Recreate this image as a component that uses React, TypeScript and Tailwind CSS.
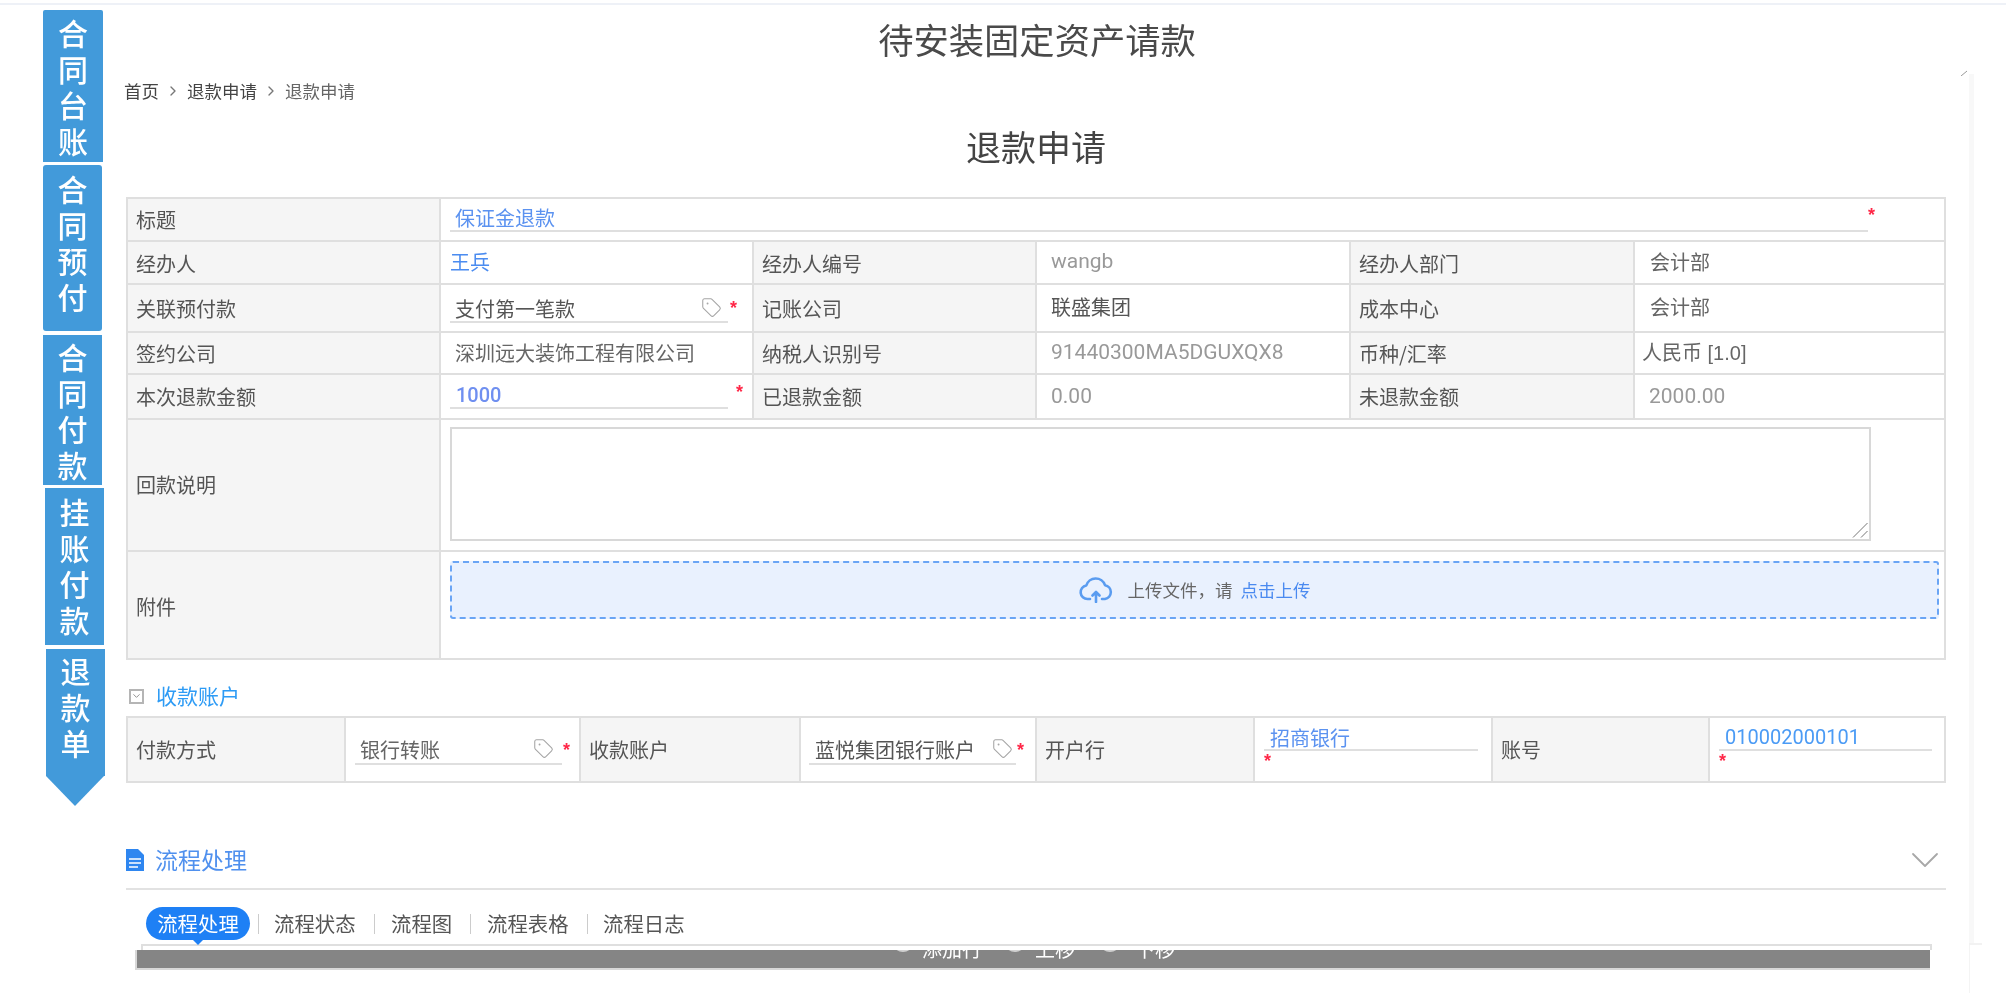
import React from "react";
import { ChevronDown, ChevronRight, Tag } from "lucide-react";

const FONT = "[font-family:'Noto_Sans_CJK_SC','Liberation_Sans',sans-serif]";
const NUM = "[font-family:Roboto,'Noto_Sans_CJK_SC',sans-serif]";

function SideBlock({ text, className }: { text: string; className: string }) {
  return (
    <div className={`flex flex-col items-center justify-center bg-[#429ada] text-[30px] font-medium leading-[36px] text-white ${className}`}>
      {text.split("").map((c, i) => (
        <span key={i}>{c}</span>
      ))}
    </div>
  );
}

const Star = ({ className = "" }: { className?: string }) => (
  <span className={`h-[12px] overflow-visible text-[18px] font-bold leading-[18px] text-[#ff2848] [font-family:'Liberation_Sans',sans-serif] ${className}`}>*</span>
);

const Label = ({ children, className = "" }: { children: React.ReactNode; className?: string }) => (
  <div className={`flex items-center border-r-2 border-[#dfdfdf] bg-[#f5f5f5] pl-[8px] text-[#555] ${className}`}>{children}</div>
);

const Val = ({ children, className = "" }: { children?: React.ReactNode; className?: string }) => (
  <div className={`flex border-r-2 border-[#dfdfdf] last:border-r-0 ${className}`}>{children}</div>
);

const TagIcon = () => <Tag size={21} strokeWidth={1.2} className="mb-[3px] shrink-0 text-[#a5a5a5]" />;

function Row({ children, className }: { children: React.ReactNode; className: string }) {
  return (
    <div className={`grid grid-cols-[313px_313px_283px_314px_284px_1fr] border-b-2 border-[#dfdfdf] ${className}`}>{children}</div>
  );
}

export default function App() {
  return (
    <div className={`relative h-[996px] w-[2006px] overflow-hidden bg-white blur-[0.4px] ${FONT}`}>
      <div className="h-[3px]" />
      <div className="h-[2px] bg-[#eef1f7]" />
      <div className="flex">
        {/* step ribbon */}
        <div className="ml-[43px] mt-[5px] flex w-[62px] shrink-0 flex-col">
          <SideBlock text="合同台账" className="h-[152px] w-[60px] rounded-t-[2px]" />
          <SideBlock text="合同预付" className="mt-[3px] h-[166px] w-[59px] rounded-[3px] pb-[12px]" />
          <SideBlock text="合同付款" className="mt-[4px] h-[150px] w-[59px]" />
          <SideBlock text="挂账付款" className="ml-[2px] mt-[3px] h-[157px] w-[59px] pb-[4px]" />
          <div className="ml-[3px] mt-[4px] w-[59px]">
            <SideBlock text="退款单" className="h-[127px] w-[59px] pb-[14px]" />
            <div className="h-0 w-0 border-x-[29.5px] border-t-[30px] border-x-transparent border-t-[#429ada]" />
          </div>
        </div>

        {/* main */}
        <div className="ml-[21px] flex w-[1820px] shrink-0 flex-col">
          <div className="mt-[9px] h-[50px] pl-[2px] text-center text-[35.3px] leading-[50px] text-[#4a4a4a]">待安装固定资产请款</div>
          <div className="-ml-[2px] mt-[15px] flex h-[24px] items-center gap-[6px] text-[17.5px] text-[#444]">
            <span>首页</span>
            <ChevronRight size={16} strokeWidth={2} className="text-[#777]" />
            <span>退款申请</span>
            <ChevronRight size={16} strokeWidth={2} className="text-[#777]" />
            <span className="text-[#666]">退款申请</span>
          </div>
          <div className="mt-[18px] h-[50px] text-center text-[35px] leading-[50px] text-[#444]">退款申请</div>

          <div className="mt-[26px] w-[1820px] border-2 border-[#dfdfdf] text-[20px]">
            <div className="grid h-[43px] grid-cols-[313px_1fr] border-b-2 border-[#dfdfdf]">
              <Label>标题</Label>
              <div className="flex pl-[9px]">
                <div className="mt-[3px] h-[30px] w-[1418px] border-b-2 border-[#dfdfdf] pl-[5px] text-[20px] leading-[31px] text-[#5b92f0]">保证金退款</div>
                <Star className="ml-[0px] mt-[7px]" />
              </div>
            </div>
            <Row className="h-[43px]">
              <Label className="pt-[2px]">经办人</Label>
              <Val className="items-center pb-[2px] pl-[9px] text-[#4b8cf0]">王兵</Val>
              <Label className="pt-[2px]">经办人编号</Label>
              <Val className={`items-center pb-[2px] pl-[14px] text-[21px] text-[#999] ${NUM}`}>wangb</Val>
              <Label className="pt-[2px]">经办人部门</Label>
              <Val className="items-center pb-[2px] pl-[15px] text-[#666]">会计部</Val>
            </Row>
            <Row className="h-[48px]">
              <Label className="pt-[2px]">关联预付款</Label>
              <Val className="items-center pl-[9px]">
                <div className="flex h-[30px] w-[278px] items-center justify-between border-b-2 border-[#dfdfdf] pl-[5px] pr-[6px] pt-[3px] text-[#555]">
                  支付第一笔款
                  <TagIcon />
                </div>
                <Star className="ml-[2px] mb-[6px]" />
              </Val>
              <Label className="pt-[2px]">记账公司</Label>
              <Val className="items-center pb-[2px] pl-[14px] text-[#555]">联盛集团</Val>
              <Label className="pt-[2px]">成本中心</Label>
              <Val className="items-center pb-[2px] pl-[15px] text-[#666]">会计部</Val>
            </Row>
            <Row className="h-[42px]">
              <Label className="pt-[2px]">签约公司</Label>
              <Val className="items-center pl-[14px] text-[#666]">深圳远大装饰工程有限公司</Val>
              <Label className="pt-[2px]">纳税人识别号</Label>
              <Val className={`items-center pl-[14px] text-[21px] text-[#999] ${NUM}`}>91440300MA5DGUXQX8</Val>
              <Label className="pt-[2px]">币种/汇率</Label>
              <Val className="items-center pl-[7px] text-[20px] text-[#666] [font-family:'Liberation_Sans','Noto_Sans_CJK_SC',sans-serif]">人民币 [1.0]</Val>
            </Row>
            <Row className="h-[45px]">
              <Label>本次退款金额</Label>
              <Val className="items-start pl-[9px] pt-[4px]">
                <div className={`flex h-[30px] w-[278px] items-center border-b-2 border-[#dfdfdf] pl-[6px] pt-[3px] text-[20px] font-medium text-[#6f8ff0] ${NUM}`}>1000</div>
                <Star className="ml-[8px] mt-[4px]" />
              </Val>
              <Label>已退款金额</Label>
              <Val className={`items-center pl-[14px] text-[21px] text-[#999] ${NUM}`}>0.00</Val>
              <Label>未退款金额</Label>
              <Val className={`items-center pl-[14px] text-[21px] text-[#999] ${NUM}`}>2000.00</Val>
            </Row>
            <div className="grid h-[132px] grid-cols-[313px_1fr] border-b-2 border-[#dfdfdf]">
              <Label>回款说明</Label>
              <div className="pl-[9px] pt-[7px]">
                <div className="relative h-[114px] w-[1421px]">
                  <textarea readOnly className="block h-[114px] w-[1421px] resize-none border-2 border-[#d8d8d8] bg-white outline-none" />
                  <svg width="16" height="16" viewBox="0 0 16 16" className="absolute bottom-[3px] right-[3px]" stroke="#777" strokeWidth="1" fill="none">
                    <path d="M1 15.5L15.5 1M9 15.5L15.5 9" />
                  </svg>
                </div>
              </div>
            </div>
            <div className="grid h-[106px] grid-cols-[313px_1fr]">
              <Label className="pt-[4px]">附件</Label>
              <div className="pl-[9px] pr-[5px] pt-[9px]">
                <div className="flex h-[58px] items-center justify-center rounded-[3px] border-2 border-dashed border-[#6aa5f5] bg-[#e9f1fe] text-[17.5px]">
                  <svg width="34" height="26" viewBox="0 0 34 26" fill="none" stroke="#5a9cf0" strokeWidth="2.6" strokeLinecap="round" strokeLinejoin="round" className="mr-[15px]">
                    <path d="M11 22H8.5a6.8 6.8 0 0 1-1.2-13.5A9.8 9.8 0 0 1 26 8.2 7 7 0 0 1 26 22h-3" />
                    <path d="M17 25V15M13.5 18.5l3.5-3.5 3.5 3.5" />
                  </svg>
                  <span className="text-[#666]">上传文件，请</span>
                  <span className="ml-[8px] text-[#4a8af0]">点击上传</span>
                </div>
              </div>
            </div>
          </div>

          <div className="ml-[3px] mt-[23px] flex h-[26px] items-center gap-[12px] text-[21px] text-[#2d9bf5]">
            <span className="flex h-[15px] w-[15px] items-center justify-center border-2 border-[#b5b5b5]">
              <ChevronDown size={12} strokeWidth={2} className="text-[#888]" />
            </span>
            收款账户
          </div>

          <div className="mt-[7px] grid h-[67px] w-[1820px] grid-cols-[218px_235px_220px_236px_218px_238px_217px_1fr] border-2 border-[#dfdfdf] text-[20px]">
            <Label>付款方式</Label>
            <Val className="items-center pl-[9px]">
              <div className="flex h-[30px] w-[207px] items-center justify-between border-b-2 border-[#dfdfdf] pl-[5px] pr-[8px] pt-[3px] text-[#666]">
                银行转账
                <TagIcon />
              </div>
              <Star className="ml-[1px] mb-[6px]" />
            </Val>
            <Label>收款账户</Label>
            <Val className="items-center pl-[8px]">
              <div className="flex h-[30px] w-[207px] items-center justify-between border-b-2 border-[#dfdfdf] pl-[6px] pr-[3px] pt-[3px] text-[#555]">
                <span className="whitespace-nowrap text-[20px]">蓝悦集团银行账户</span>
                <TagIcon />
              </div>
              <Star className="ml-[1px] mb-[6px]" />
            </Val>
            <Label>开户行</Label>
            <Val className="flex-col items-start pl-[9px] pt-[9px]">
              <div className="h-[24px] w-[214px] border-b-2 border-[#dfdfdf] pl-[6px] text-[20px] leading-[22px] text-[#5b92f0]">招商银行</div>
              <Star className="mt-[1px]" />
            </Val>
            <Label>账号</Label>
            <Val className="flex-col items-start pl-[9px] pt-[9px]">
              <div className={`h-[24px] w-[213px] border-b-2 border-[#dfdfdf] pl-[6px] text-[20px] leading-[20px] text-[#4b9bf5] ${NUM}`}>010002000101</div>
              <Star className="mt-[1px]" />
            </Val>
          </div>

          <div className="mt-[45px] flex h-[62px] w-[1820px] items-center border-b-2 border-[#e2e2e2] pt-[3px]">
            <svg width="18" height="22" viewBox="0 0 18 22" className="shrink-0">
              <path d="M0 0H12L18 6V22H0Z" fill="#2e86f0" />
              <path d="M3 10H15M3 14H15M3 18H12" stroke="#fff" strokeWidth="1.4" />
            </svg>
            <span className="ml-[11px] text-[23px] text-[#4f90ee]">流程处理</span>
            <ChevronDown size={48} strokeWidth={0.9} className="-mr-[3px] ml-auto text-[#a8a8a8]" />
          </div>

          <div className="mt-[17px] flex h-[33px] items-center pl-[20px] text-[20.4px] text-[#555]">
            <span className="relative flex h-[33px] w-[104px] items-center justify-center rounded-full bg-[#1e80f5] text-white">
              流程处理
              <span className="absolute left-[46px] top-[32px] h-0 w-0 border-x-[6px] border-t-[6px] border-x-transparent border-t-[#1e80f5]" />
            </span>
            <span className="ml-[8px] h-[20px] w-[1px] bg-[#ccc]" />
            <span className="ml-[15px] w-[82px]">流程状态</span>
            <span className="ml-[18px] h-[20px] w-[1px] bg-[#ccc]" />
            <span className="ml-[16px] w-[60px] whitespace-nowrap">流程图</span>
            <span className="ml-[19px] h-[20px] w-[1px] bg-[#ccc]" />
            <span className="ml-[16px] w-[82px]">流程表格</span>
            <span className="ml-[18px] h-[20px] w-[1px] bg-[#ccc]" />
            <span className="ml-[15px] w-[82px]">流程日志</span>
          </div>

          <div className="ml-[15px] mt-[4px] h-[6px] w-[1791px] border-x-2 border-t-2 border-[#dfdfdf]" />
          <div className="ml-[9px] h-[20px] w-[1795px] overflow-hidden border-b-2 border-l-2 border-[#d8d8d8] bg-[#858585] text-[20px] leading-[20px] text-white">
            <div className="relative top-[-11px] flex h-[20px] items-start pl-[755px]">
              <span className="-mt-[9px] h-[22px] w-[22px] shrink-0 rounded-full border-2 border-[#d0d0d0]" />
              <span className="ml-[8px] whitespace-nowrap">添加行</span>
              <span className="-mt-[9px] ml-[22px] h-[22px] w-[22px] shrink-0 rounded-full border-2 border-[#d0d0d0]" />
              <span className="ml-[9px] whitespace-nowrap">上移</span>
              <span className="-mt-[9px] ml-[24px] h-[22px] w-[22px] shrink-0 rounded-full border-2 border-[#d0d0d0]" />
              <span className="ml-[14px] whitespace-nowrap">下移</span>
            </div>
          </div>
        </div>

        {/* faint edge of the page's scroll track */}
        <div className="relative ml-[23px] mt-[69px] flex shrink-0 flex-col">
          <svg width="7" height="6" viewBox="0 0 7 6" className="absolute -left-[8px] -top-[4px]" stroke="#999" strokeWidth="1">
            <path d="M0 6L6 1" />
          </svg>
          <div className="h-[869px] w-[5px] bg-[#f8f8f8]" />
          <div className="h-[2px] w-[13px] bg-[#f2f2f2]" />
          <div className="h-[48px] w-[1px] bg-[#f4f4f4]" />
        </div>
      </div>
    </div>
  );
}
